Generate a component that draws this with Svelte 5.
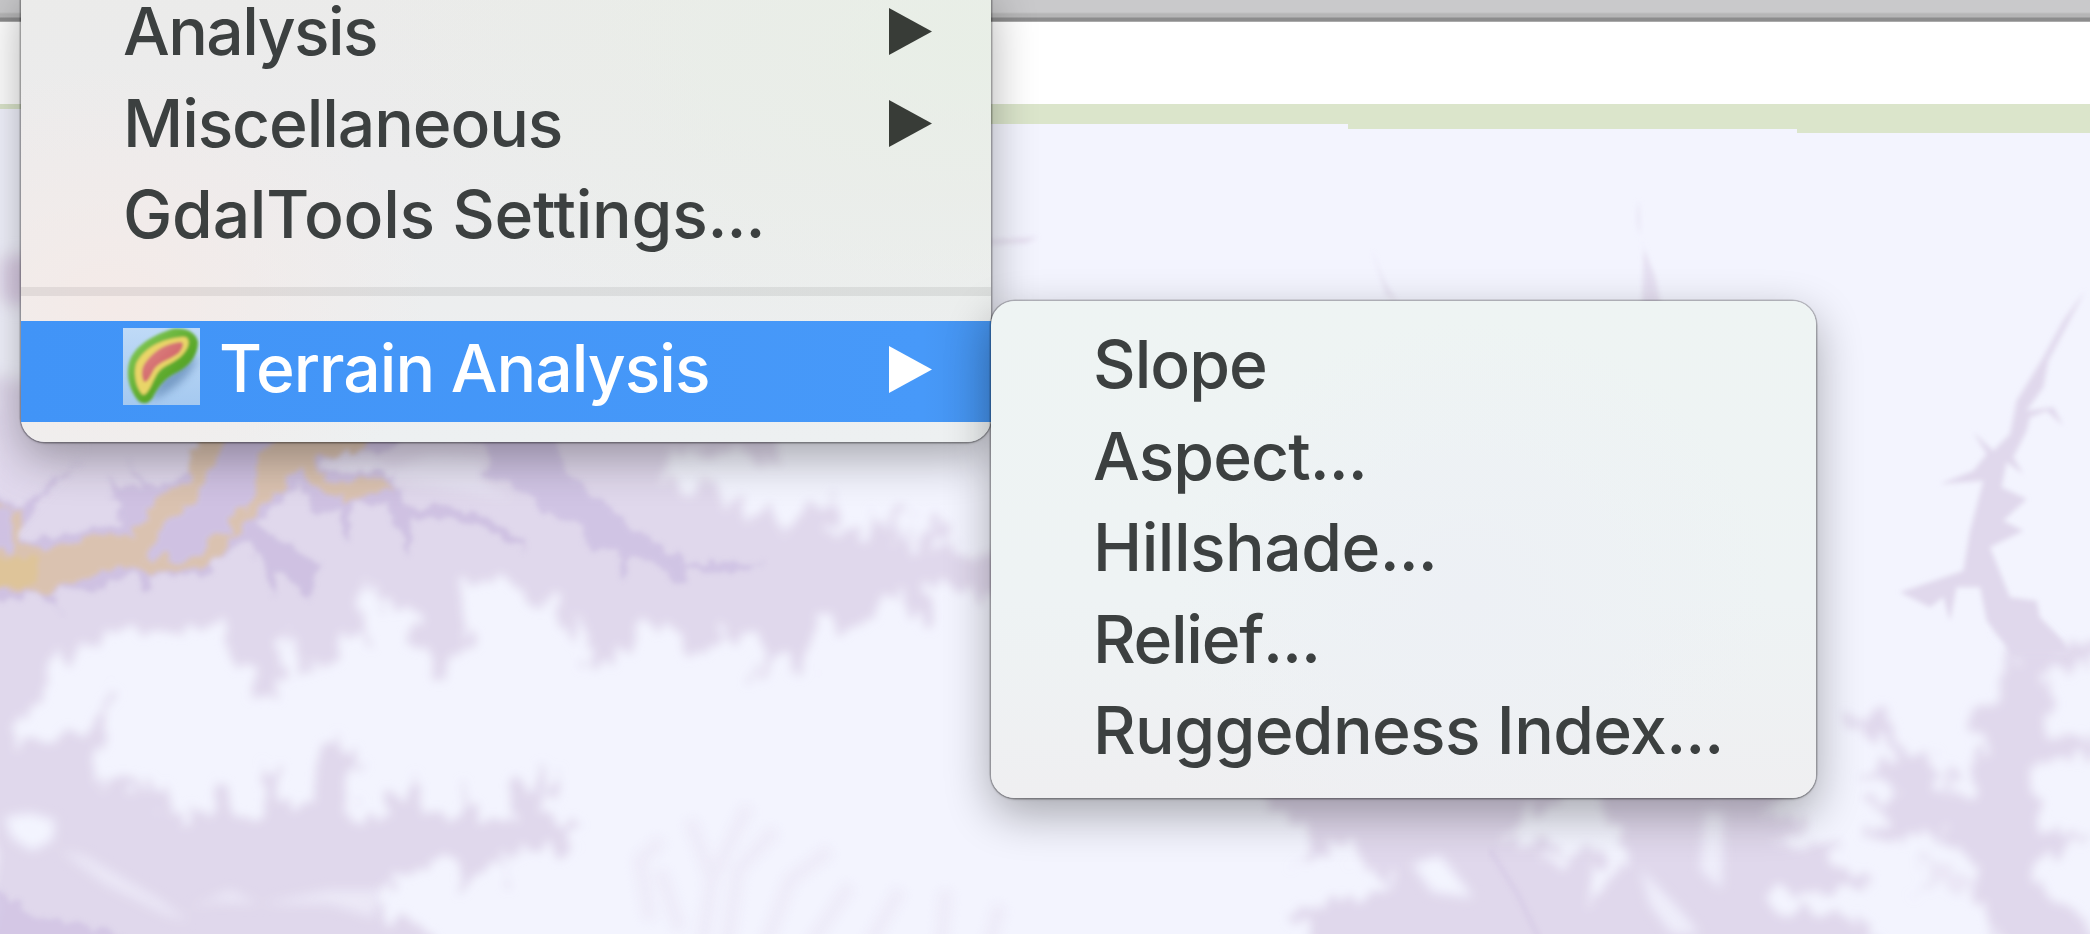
<script>
  const mainItems = [
    { label: 'Analysis', arrow: true, track: -1.6 },
    { label: 'Miscellaneous', arrow: true, track: -1.1 },
    { label: 'GdalTools Settings', dots: true, arrow: false, track: -0.25 }
  ];
  const terrainItems = [
    { label: 'Slope', track: -1 },
    { label: 'Aspect', dots: true, track: -0.9 },
    { label: 'Hillshade', dots: true, track: -0.5 },
    { label: 'Relief', dots: true, track: -1.3 },
    { label: 'Ruggedness Index', dots: true, track: -0.65 }
  ];
</script>

{#snippet arrow()}
  <svg class="arrow" viewBox="0 0 43 47"><path d="M0 0 L43 23.5 L0 47 Z" fill="currentColor" /></svg>
{/snippet}

<main class="window">
  <div class="toolbar"></div>
  <div class="margin"></div>
  <div class="map">
    <svg viewBox="0 104 2090 830" preserveAspectRatio="none">
      <defs>
        <filter id="soft" x="-5%" y="-5%" width="110%" height="110%">
          <feTurbulence type="fractalNoise" baseFrequency=".065 .03" numOctaves="3" seed="4" />
          <feDisplacementMap in="SourceGraphic" scale="38" xChannelSelector="R" yChannelSelector="G" />
          <feGaussianBlur stdDeviation="4.6" />
        </filter>
        <filter id="plain" x="-5%" y="-5%" width="110%" height="110%"><feGaussianBlur stdDeviation="6" /></filter>
        <filter id="fine" x="-5%" y="-5%" width="110%" height="110%"><feGaussianBlur stdDeviation="2.6" /></filter>
        <filter id="river" x="-5%" y="-5%" width="110%" height="110%">
          <feTurbulence type="fractalNoise" baseFrequency=".07" numOctaves="2" seed="9" />
          <feDisplacementMap in="SourceGraphic" scale="18" xChannelSelector="R" yChannelSelector="G" />
          <feGaussianBlur stdDeviation="2.6" />
        </filter>
        <filter id="wide" x="-20%" y="-20%" width="140%" height="140%"><feGaussianBlur stdDeviation="8" /></filter>
      </defs>

      <g filter="url(#soft)" fill="#e0d8ec">
        <g transform="translate(0 430) scale(.63776 .33333)">
          <path d="M-20 -60 H760 L1210 0 L1208 110 L1170 60 L1120 80 L1060 60 L1050 150 L1085 200 L1095 145 L1125 185 L1140 250 L1160 200 L1175 265 L1212 215 L1225 320 L1250 270 L1310 200 L1290 310 L1330 285 L1345 325 L1375 235 L1385 300 L1435 230 L1410 350 L1485 270 L1470 350 L1500 340 L1495 385 L1570 370 V510 L1530 500 L1490 450 L1455 490 L1450 600 L1425 530 L1405 490 L1360 560 L1320 610 L1310 540 L1280 540 L1270 700 L1257 770 L1235 670 L1190 740 L1180 730 L1200 650 L1185 590 L1160 640 L1135 580 L1120 650 L1085 660 L1070 600 L1010 590 L1000 650 L950 705 L915 710 L930 650 L910 560 L895 640 L870 480 L850 550 L820 470 L730 455 L725 540 L745 610 L715 660 L690 770 L675 665 L635 630 L655 560 L620 560 L570 440 L560 520 L580 660 L545 600 L515 725 L490 690 L475 745 L465 610 L440 650 L440 800 L425 820 L400 790 L400 710 L365 680 L350 570 L290 605 L220 600 L165 575 L155 640 L115 690 L75 690 L80 770 L25 880 L20 940 L70 930 L150 890 L180 760 L170 870 L155 960 L150 1060 L205 1020 L200 1095 L270 1035 L265 1130 L285 1200 L300 1130 L340 1165 L335 1045 L375 1165 L410 1130 L420 970 L440 1100 L465 1160 L500 1080 L490 1010 L530 900 L525 980 L575 995 L545 1025 L550 1160 L600 1170 L605 1080 L640 1120 L660 1020 L660 1160 L720 1160 L735 1070 L745 1165 L810 1170 L800 1080 L850 1010 L840 1100 L880 1040 L850 1160 L910 1160 L880 1215 L905 1260 L840 1260 L780 1290 L800 1370 L770 1300 L710 1400 L720 1330 L690 1260 L670 1320 L600 1370 L590 1460 L640 1470 L690 1530 V1600 H-20 Z" />
        </g>
        <g transform="translate(1200 774) scale(.33333)">
          <path d="M180 0 L200 110 L310 140 L340 190 L270 280 L400 210 L460 200 L470 270 L590 320 L530 355 L390 380 L270 440 L350 450 L350 560 H1500 L1410 400 L1350 370 L1260 270 L1170 400 L1190 310 L1230 250 L1190 220 L1100 260 L1020 270 L1090 220 L920 190 L960 130 L1100 70 V0 Z" />
          <path d="M1190 0 L1240 150 L1340 190 L1290 240 L1370 270 L1390 330 L1500 390 V0 Z" />
        </g>
        <g transform="translate(1640 634) scale(.33333)">
          <path d="M-50 460 H450 L380 530 L500 560 L480 600 L400 630 L500 650 L580 610 L560 690 L700 740 L590 780 L440 770 L370 780 L400 850 L500 820 L580 830 L640 860 L760 970 H-50 Z" />
          <path d="M1070 -20 L1120 70 L1080 200 L980 220 L970 280 L1060 320 L1010 370 L990 490 L960 480 L940 390 L900 470 L870 450 L890 380 L780 340 L740 220 L690 260 L590 220 L650 280 L740 340 L760 390 L680 410 L760 440 L780 490 L680 500 L750 560 L680 600 L740 640 L850 590 L960 640 L1020 710 L1030 800 L1110 970 H1420 L1240 790 L1180 680 L1250 650 L1340 610 L1210 590 L1200 500 L1160 400 L1260 370 L1400 370 V320 L1190 290 L1240 220 L1230 110 L1400 70 V25 L1230 50 L1200 -20 Z" />
          <path d="M840 670 L880 740 L810 770 L940 760 L1080 830 L1020 760 L930 700 Z" opacity=".45" />
        </g>
      </g>

      <g filter="url(#fine)">
        <g transform="translate(1840 264) scale(.33333)" fill="#e0d8ec">
          <path d="M735 80 L670 170 L610 280 L530 410 L510 510 L460 560 L400 505 L440 570 L400 620 L300 660 L430 650 L390 800 L370 920 L180 985 L270 1030 L310 1000 L330 1070 L350 970 L420 970 L440 1070 L520 1170 H690 L670 1130 L600 1060 L590 1010 L510 1000 L450 850 L550 800 L490 770 L560 705 L485 670 L500 595 L550 630 L520 580 L560 500 L570 460 L620 440 L670 485 L640 430 L560 440 L610 370 L625 290 Z" />
        </g>
        <path d="M1639 200 Q1634 225 1644 246 L1642 306 H1661 L1655 276 Q1644 250 1640 235 Z" fill="#e0d8ec" opacity=".75" />
        <path d="M1372 250 L1386 296 L1398 302 L1384 280 Z" fill="#e0d8ec" opacity=".5" />
        <path d="M990 240 L1038 237 L1026 243 L990 244 Z" fill="#ddd0e8" opacity=".6" />
      </g>

      <g filter="url(#wide)">
        <path d="M0 260 Q25 245 40 270 L30 302 Q12 311 0 297 Z" fill="#dccfe6" />
        <path d="M-10 375 L45 385 L75 450 L0 530 Z" fill="#e0d8ec" />
      </g>
      <g filter="url(#plain)" fill="#f3f4fe">
        <path d="M4 817 L30 813 L55 820 L53 840 L32 851 L12 838 Z" />
        <path d="M60 850 L85 856 L160 900 L190 922 L165 914 L105 884 Z" opacity=".6" />
        <path d="M190 908 L230 890 L260 904 L330 890 L380 890 L374 918 L330 904 L270 904 L215 902 Z" opacity=".6" />
        <path d="M320 464 L372 458 L392 470 L430 454 L485 458 L482 482 L515 500 L410 482 L360 476 L325 470 Z" opacity=".4" />
        <path d="M1412 864 L1440 855 L1474 898 L1432 892 Z" />
        <path d="M1705 810 L1724 812 L1722 890 L1700 870 Z" opacity=".8" />
        <path d="M1640 868 L1680 910 L1700 934 H1672 L1650 905 Z" opacity=".8" />
      </g>
      <g filter="url(#plain)" fill="none" stroke="#e6def0" stroke-width="13" opacity=".4">
        <path d="M700 960 L712 880 L690 820 M712 880 L748 806 M725 960 L738 870 L775 830 M650 920 L640 860 L662 840 M680 930 L660 870 M760 960 L790 880 L830 850 M800 960 L850 885 M860 960 L900 890 M940 960 L946 890 M985 960 L1000 905" />
      </g>

      <g filter="url(#river)">
        <g transform="translate(0 430) scale(.63776 .33333)">
          <path d="M-20 190 L35 225 L80 160 L125 100 L65 200 L40 275 L30 335 L75 325 L140 300 L190 275 L170 150 L225 180 L200 90 L240 175 L300 120 L330 -40 L640 -60 L620 60 L540 70 L500 100 L520 130 L610 125 L640 230 L710 230 L770 265 L825 350 L790 330 L750 275 L645 260 L640 380 L610 220 L555 220 L545 340 L530 240 L495 260 L470 160 L400 280 L500 410 L490 500 L430 420 L430 500 L410 400 L385 330 L335 390 L330 440 L235 435 L232 500 L210 430 L150 480 L80 480 L100 550 L60 490 L-20 520 Z" fill="#cbbde1" opacity=".85" />
          <path d="M690 -50 L860 -20 L890 130 L940 200 L990 300 L1075 390 L1130 400 L1200 405 L1130 435 L1080 410 L1070 460 L1040 420 L990 370 L980 450 L970 370 L920 350 L910 280 L845 250 L830 190 L760 140 L770 70 Z" fill="#cbbde1" opacity=".75" />
          <path d="M-20 1340 L40 1450 L160 1490 L220 1560 H-20 Z" fill="#cbbde1" opacity=".6" />
          <path d="M-20 355 L20 370 L20 240 L-20 225 V210 L35 245 L35 345 L110 350 L160 310 L210 310 L245 200 L290 160 L325 -50 H370 L315 190 L270 270 L225 385 L310 385 L330 320 L365 310 L360 240 L395 240 L405 80 L470 -50 H580 L570 60 L490 90 L520 155 L600 140 L620 180 L540 210 L500 190 L470 110 L440 190 L380 290 L350 350 L325 410 L235 430 L200 405 L150 430 L75 485 L-20 480 Z" fill="#dac2b0" />
          <path d="M-20 380 L60 385 L50 470 L-20 480 Z" fill="#dfc494" opacity=".8" />
        </g>
      </g>
      <g filter="url(#fine)" fill="none" stroke="#d3c6e4" stroke-width="5" opacity=".5">
        <path d="M1490 850 L1518 895 L1530 920 L1540 940" />
      </g>
      <path d="M0 104 H2090 V133 H1797 V129 H1348 V124 H500 V109 H0 Z" fill="#dbe5cb" />
    </svg>
  </div>

  <nav class="menu main">
    {#each mainItems as item}
      <div class="item">
        <span style="letter-spacing: {item.track}px">{item.label}{#if item.dots}<span class="dots">...</span>{/if}</span>
        {#if item.arrow}{@render arrow()}{/if}
      </div>
    {/each}
    <div class="separator"></div>
    <div class="item selected">
      <svg class="icon" viewBox="0 0 77 77">
        <defs>
          <linearGradient id="tile" x1="0" y1="0" x2="0" y2="1"><stop offset="0" stop-color="#bfdaf7" /><stop offset="1" stop-color="#a5c9f0" /></linearGradient>
          <linearGradient id="leaf" x1="0" y1="0" x2="1" y2="1"><stop offset="0" stop-color="#8bcf62" /><stop offset=".6" stop-color="#5aa82a" /><stop offset="1" stop-color="#488e20" /></linearGradient>
          <linearGradient id="core" x1="0" y1="0" x2="1" y2="1"><stop offset="0" stop-color="#e18a86" /><stop offset="1" stop-color="#c8535b" /></linearGradient>
          <filter id="i1"><feGaussianBlur stdDeviation="1.7" /></filter>
          <filter id="i2" x="-30%" y="-30%" width="160%" height="160%"><feGaussianBlur stdDeviation="4" /></filter>
        </defs>
        <rect width="77" height="77" fill="url(#tile)" />
        <path d="M75 28 C70 45 55 58 38 68 L28 72 L38 50 L60 35 Z" fill="#6d93bd" filter="url(#i2)" opacity=".85" />
        <g filter="url(#i1)">
          <path d="M49 1 C60 -1 73 3 75 14 C75 29 65 39 53 45 C42 50 37 57 31 67 C27 77 18 78 13 70 C6 60 3 47 6 35 C11 17 31 7 49 1 Z" fill="url(#leaf)" />
          <path d="M62 9 C67 10 67 18 61 25 C53 35 39 37 34 46 C29 54 26 66 20 67 C14 62 10 48 13 36 C21 18 44 9 62 9 Z" fill="#e9d568" />
          <path d="M57 14 C62 14 60 20 56 25 C47 32 38 33 32 40 C28 46 26 54 21 54 C18 48 18 41 22 35 C31 22 44 15 57 14 Z" fill="url(#core)" />
        </g>
      </svg>
      <span style="letter-spacing: -1px">Terrain Analysis</span>
      {@render arrow()}
    </div>
  </nav>

  <nav class="menu sub">
    {#each terrainItems as item}
      <div class="item">
        <span style="letter-spacing: {item.track}px">{item.label}{#if item.dots}<span class="dots">...</span>{/if}</span>
      </div>
    {/each}
  </nav>
</main>

<style>
  :global(body) { margin: 0; overflow: hidden; }
  .window {
    position: relative;
    display: flex;
    flex-direction: column;
    width: 2090px;
    height: 934px;
    overflow: hidden;
    background: #f3f4fe;
    font-family: Inter, 'Liberation Sans', sans-serif;
    font-size: 66px;
    font-weight: 500;
    color: #3c4040;
  }
  .toolbar {
    flex: none;
    box-sizing: border-box;
    height: 22px;
    background: linear-gradient(#c9c9cb 0 12px, #b5b5b6 14px 17px, #8c8c8d 18px 21px, #c8c8c8 22px);
  }
  .margin { flex: none; height: 82px; background: #fff; }
  .map { flex: 1; min-height: 0; }
  .map svg { display: block; width: 100%; height: 100%; }

  .menu {
    position: absolute;
    box-sizing: border-box;
    display: flex;
    flex-direction: column;
    box-shadow: 0 0 0 1.5px rgba(0, 0, 0, .2), 0 1px 3px rgba(0, 0, 0, .3), 0 16px 46px rgba(0, 0, 0, .32);
  }
  .main {
    left: 21px;
    top: -14px;
    width: 970px;
    height: 456px;
    border-radius: 0 0 24px 24px;
    background:
      radial-gradient(ellipse 320px 240px at 90px 320px, rgba(245, 234, 231, .9), transparent),
      radial-gradient(ellipse 620px 330px at 960px 60px, rgba(232, 239, 230, .9), transparent),
      linear-gradient(#ebebea, #ececed 40%, #edf0f1);
  }
  .sub {
    left: 991px;
    top: 301px;
    width: 825px;
    height: 497px;
    padding-top: 18px;
    border-radius: 24px;
    background:
      radial-gradient(ellipse 300px 280px at 480px 300px, #edf0f5, transparent),
      linear-gradient(#eef4f3, #eef3f4 60%, #efeff1);
  }
  .item {
    flex: none;
    display: flex;
    align-items: center;
    height: 91.5px;
    padding: 0 59px 0 102px;
    line-height: 91.5px;
    white-space: pre;
  }
  .dots { letter-spacing: -1px; }
  .item .arrow { margin-left: auto; }
  .arrow { flex: none; width: 43px; height: 47px; color: #383c37; }
  .separator { flex: none; height: 9px; margin: 26.5px 0 24.5px; background: rgba(60, 50, 50, .09); }
  .selected {
    height: 101px;
    background: linear-gradient(90deg, #4194f7, #4799f9 93%, #4491ea);
    color: #fff;
  }
  .selected > span { margin: -4px 0 0 19px; }
  .selected .arrow { color: #fff; margin-top: -3px; }
  .icon { flex: none; width: 77px; height: 77px; margin-top: -10px; }
</style>
